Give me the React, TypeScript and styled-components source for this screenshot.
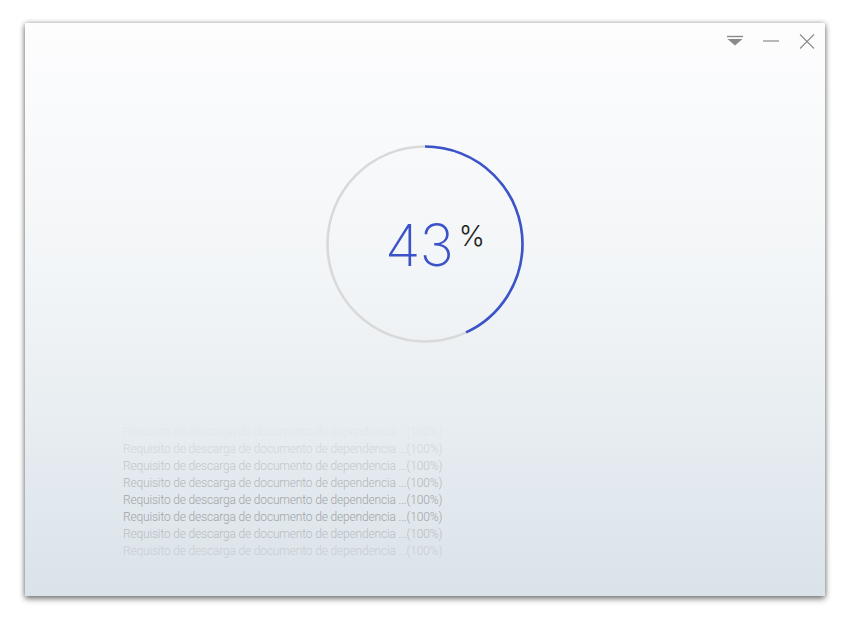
import React from "react";
import styled, { createGlobalStyle } from "styled-components";

const Global = createGlobalStyle`
  html, body { margin: 0; padding: 0; background: #ffffff; }
  body { font-family: "Inter", "Liberation Sans", sans-serif; }
`;

const Page = styled.div`
  padding: 23px 25px;
  width: 800px;
`;

const Window = styled.div`
  width: 800px;
  height: 573px;
  display: flex;
  flex-direction: column;
  background: linear-gradient(180deg, #fdfdfe 0%, #f2f5f7 45%, #dae3ea 100%);
  box-shadow: 0 3px 6px rgba(0, 0, 0, 0.45), 0 0 5px rgba(0, 0, 0, 0.3);
`;

const TitleBar = styled.div`
  height: 36px;
  display: flex;
  justify-content: flex-end;
  align-items: flex-start;
  padding: 0;
`;

const CtrlButton = styled.button`
  width: 36px;
  height: 26px;
  margin-top: 5px;
  border: 0;
  background: transparent;
  padding: 0;
  display: flex;
  align-items: center;
  justify-content: center;
  cursor: pointer;
`;

const Center = styled.div`
  display: flex;
  justify-content: center;
  padding-top: 86px;
`;

const Ring = styled.div`
  position: relative;
  width: 198px;
  height: 198px;
  display: flex;
  align-items: center;
  justify-content: center;
`;

const RingSvg = styled.svg`
  position: absolute;
  inset: 0;
`;

const Value = styled.div`
  display: flex;
  align-items: flex-start;
  margin-left: 20px;
  margin-top: 2px;
`;

const Number = styled.span`
  font-family: "Inter", "Liberation Sans", sans-serif;
  font-weight: 200;
  font-size: 58px;
  line-height: 1;
  color: #3c52c9;
  letter-spacing: -1px;
`;

const Percent = styled.span`
  font-family: "Inter", "Liberation Sans", sans-serif;
  font-weight: 300;
  font-size: 28px;
  line-height: 1;
  color: #222;
  margin-left: 6px;
  margin-top: 6px;
`;

const Log = styled.div`
  display: flex;
  flex-direction: column;
  padding: 81px 0 0 98px;
`;

const LogLine = styled.div<{ $c: string }>`
  font-family: "Roboto", "Liberation Sans", sans-serif;
  font-weight: 300;
  font-size: 12px;
  letter-spacing: -0.17px;
  line-height: 17px;
  height: 17px;
  color: ${(p) => p.$c};
  white-space: nowrap;
`;

const lineColors = [
  "#e3e7eb",
  "#d2d6d9",
  "#c3c6c9",
  "#b3b5b8",
  "#a2a4a6",
  "#a2a4a6",
  "#b9bcbf",
  "#c9ccd0",
];

const R = 97.5;
const C = 2 * Math.PI * R;
const pct = 43;

export default function App() {
  return (
    <>
      <Global />
      <Page>
        <Window>
          <TitleBar>
            <CtrlButton aria-label="menu">
              <svg width="18" height="12" viewBox="0 0 18 12">
                <line x1="1" y1="1.5" x2="17" y2="1.5" stroke="#8a8a8a" strokeWidth="1.4" />
                <polygon points="1.5,4 16.5,4 9,10.5" fill="#8a8a8a" />
              </svg>
            </CtrlButton>
            <CtrlButton aria-label="minimize">
              <svg width="18" height="4" viewBox="0 0 18 4">
                <line x1="1" y1="2" x2="17" y2="2" stroke="#8a8a8a" strokeWidth="1.2" />
              </svg>
            </CtrlButton>
            <CtrlButton aria-label="close">
              <svg width="16" height="15" viewBox="0 0 16 15">
                <line x1="1" y1="0.5" x2="15" y2="14.5" stroke="#8a8a8a" strokeWidth="1.1" />
                <line x1="15" y1="0.5" x2="1" y2="14.5" stroke="#8a8a8a" strokeWidth="1.1" />
              </svg>
            </CtrlButton>
          </TitleBar>
          <Center>
            <Ring>
              <RingSvg width="198" height="198" viewBox="0 0 198 198">
                <circle cx="99" cy="99" r={R} fill="none" stroke="#d9d9d9" strokeWidth="2.6" />
                <circle
                  cx="99"
                  cy="99"
                  r={R}
                  fill="none"
                  stroke="#3b54c9"
                  strokeWidth="2.6"
                  strokeDasharray={`${(C * pct) / 100} ${C}`}
                  transform="rotate(-90 99 99)"
                />
              </RingSvg>
              <Value>
                <Number>{pct}</Number>
                <Percent>%</Percent>
              </Value>
            </Ring>
          </Center>
          <Log>
            {lineColors.map((c, i) => (
              <LogLine key={i} $c={c}>
                Requisito de descarga de documento de dependencia ...(100%)
              </LogLine>
            ))}
          </Log>
        </Window>
      </Page>
    </>
  );
}
